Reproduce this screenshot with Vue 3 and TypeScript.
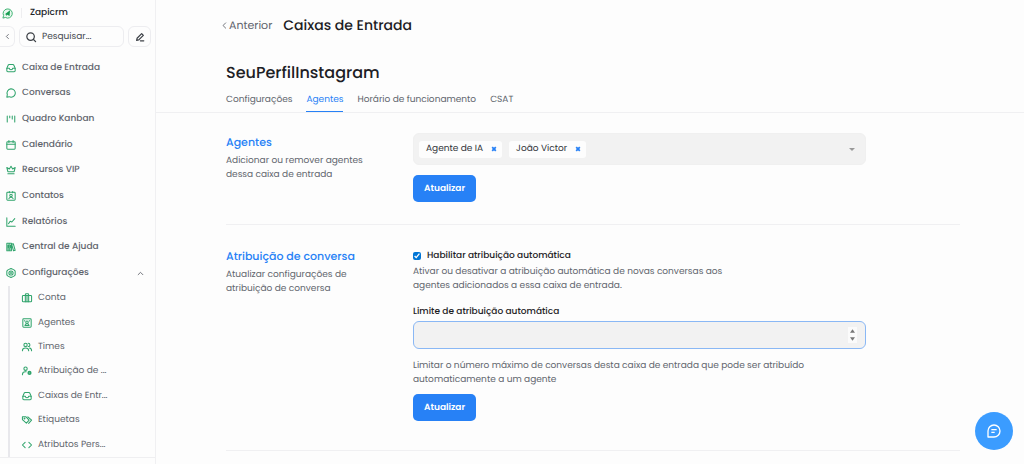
<script setup lang="ts">
import { ref } from 'vue'

interface NavItem {
  label: string
  icon: string
}

const icons: Record<string, string> = {
  inbox:
    '<path d="M2 13 5 5.500A3 3 0 0 1 7.800 3.500h8.400a3 3 0 0 1 2.800 2L22 13v5.500a2.500 2.500 0 0 1-2.500 2.500h-15A2.500 2.500 0 0 1 2 18.500z"/><path d="M2 12.500h6c0 2 1.800 3.500 4 3.500s4-1.500 4-3.500h6"/>',
  chat: '<path d="M2 22l1.200-6A10 10 0 1 1 7.500 20.800z"/>',
  kanban: '<path d="M3 5v14M9 5v4M15 5v7M21 5v14"/>',
  calendar: '<rect x="2" y="4" width="20" height="18" rx="2"/><path d="M2 10h20M7 1v5M17 1v5"/>',
  crown: '<path d="M4.500 16 2 6l6 3.500L12 3l4 6.500L22 6l-2.500 10zM4.500 21h15"/>',
  contact:
    '<rect x="2" y="3" width="20" height="19" rx="2"/><circle cx="12" cy="11" r="3"/><path d="M7 18.500c.8-2.500 2.500-3.500 5-3.500s4.200 1 5 3.500M8 1v3M16 1v3"/>',
  chart: '<path d="M2 2v20h20M6 16l4-6 4 2 7-8"/>',
  library: '<path d="M2 3h5.500v18H2zM7.500 3H13v18H7.500zM2 17h11M13.500 5l4-1 4.500 16-4 1zM5 7v6M10.500 7v6"/>',
  gear: '<path d="M9.500 2.200 12 1l2.500 1.200 5.500 3 2 2.300v9l-2 2.300-5.500 3L12 23l-2.500-1.200-5.500-3-2-2.300v-9l2-2.300z"/><circle cx="12" cy="12" r="5"/><circle cx="12" cy="12" r="1"/>',
  briefcase: '<rect x="1" y="6" width="22" height="15" rx="2"/><path d="M8 21V4a2 2 0 0 1 2-2h4a2 2 0 0 1 2 2v17M12 6v15"/>',
  agent:
    '<rect x="2" y="2" width="20" height="20" rx="2"/><circle cx="12" cy="10" r="3"/><path d="M7 18c.5-3 2.500-4 5-4s4.500 1 5 4zM6.500 6v1M17.500 6v1"/>',
  team: '<circle cx="8.500" cy="7" r="4"/><path d="M1 21c0-4 3-6.500 7.500-6.500S16 17 16 21M15 3a4 4 0 0 1 0 8M18 14.500c3.500.5 5 3 5 6.500"/>',
  assign:
    '<circle cx="8.500" cy="6.500" r="4"/><path d="M1 21c0-4.500 2.500-7 7-7h2"/><circle cx="18" cy="16.500" r="3" stroke-width="4"/>',
  tag: '<path d="M1 4h8l8 8.500-6.500 7L1 11zM14 4.500l9 8-7 7.500"/><circle cx="6" cy="8.500" r="1"/>',
  code: '<path d="M7.500 5.500 1 12l6.500 6.500M16.500 5.500 23 12l-6.500 6.500"/>',
}

const mainItems: NavItem[] = [
  { label: 'Caixa de Entrada', icon: 'inbox' },
  { label: 'Conversas', icon: 'chat' },
  { label: 'Quadro Kanban', icon: 'kanban' },
  { label: 'Calendário', icon: 'calendar' },
  { label: 'Recursos VIP', icon: 'crown' },
  { label: 'Contatos', icon: 'contact' },
  { label: 'Relatórios', icon: 'chart' },
  { label: 'Central de Ajuda', icon: 'library' },
  { label: 'Configurações', icon: 'gear' },
]

const subItems: NavItem[] = [
  { label: 'Conta', icon: 'briefcase' },
  { label: 'Agentes', icon: 'agent' },
  { label: 'Times', icon: 'team' },
  { label: 'Atribuição de ...', icon: 'assign' },
  { label: 'Caixas de Entr...', icon: 'inbox' },
  { label: 'Etiquetas', icon: 'tag' },
  { label: 'Atributos Pers...', icon: 'code' },
]

const tabs = ['Configurações', 'Agentes', 'Horário de funcionamento', 'CSAT']
const activeTab = ref('Agentes')
const agents = ref(['Agente de IA', 'João Victor'])
const autoAssign = ref(true)
const limit = ref<number | ''>('')

function removeAgent(name: string) {
  agents.value = agents.value.filter((a) => a !== name)
}

function step(delta: number) {
  limit.value = Math.max(0, Number(limit.value) + delta)
}
</script>

<template>
  <div class="app">
    <aside class="sidebar">
      <div class="brand">
        <svg class="logo" viewBox="0 0 24 24" aria-hidden="true">
          <path d="M2 22l1.500-5.500A10 10 0 1 1 7.500 20.700z" fill="#e9f8ef" stroke="#2fae68" stroke-width="2" />
          <path d="M5.500 14 17.500 5l-1 12.500-5-3-2.500 3v-4z" fill="#169c50" />
        </svg>
        <span class="brand-sep"></span>
        <span class="brand-name">Zapicrm</span>
      </div>
      <div class="search-row">
        <button class="collapse" type="button" aria-label="Recolher">
          <svg class="tiny" viewBox="0 0 24 24"><path d="M15 5l-7 7 7 7" /></svg>
        </button>
        <label class="search">
          <svg class="ico dark" viewBox="0 0 24 24"><circle cx="11" cy="11" r="9" /><path d="M18 18l5 5" /></svg>
          <input type="text" placeholder="Pesquisar..." aria-label="Pesquisar" />
        </label>
        <button class="compose" type="button" aria-label="Nova conversa">
          <svg class="ico dark" viewBox="0 0 24 24"><path d="M4 20l1-5L16 4l4 4L9 19zM13 21h8" /></svg>
        </button>
      </div>
      <nav class="nav">
        <ul class="main-list">
          <li v-for="item in mainItems" :key="item.label">
            <a href="#" class="nav-link">
              <svg class="ico" viewBox="0 0 24 24" aria-hidden="true" v-html="icons[item.icon]"></svg>
              <span>{{ item.label }}</span>
              <svg v-if="item.icon === 'gear'" class="tiny chevron" viewBox="0 0 24 24"><path d="M4 16l8-8 8 8" /></svg>
            </a>
          </li>
        </ul>
        <ul class="sub-list">
          <li v-for="item in subItems" :key="item.label">
            <a href="#" class="nav-link">
              <svg class="ico" viewBox="0 0 24 24" aria-hidden="true" v-html="icons[item.icon]"></svg>
              <span>{{ item.label }}</span>
            </a>
          </li>
        </ul>
      </nav>
    </aside>

    <main class="content">
      <header class="topbar">
        <a href="#" class="back">
          <svg class="tiny" viewBox="0 0 24 24"><path d="M16 3l-9 9 9 9" /></svg>
          Anterior
        </a>
        <h1>Caixas de Entrada</h1>
      </header>

      <div class="inbox-head">
        <h2>SeuPerfilInstagram</h2>
        <nav class="tabs">
          <a
            v-for="tab in tabs"
            :key="tab"
            href="#"
            :class="['tab', { active: tab === activeTab }]"
            @click.prevent="activeTab = tab"
            >{{ tab }}</a
          >
        </nav>
      </div>

      <section class="setting">
        <div class="intro">
          <h3>Agentes</h3>
          <p>Adicionar ou remover agentes dessa caixa de entrada</p>
        </div>
        <div class="fields">
          <div class="multiselect">
            <span v-for="agent in agents" :key="agent" class="chip">
              {{ agent }}
              <button type="button" :aria-label="'Remover ' + agent" @click="removeAgent(agent)">
                <svg viewBox="0 0 10 10"><path d="M2 2l6 6M8 2l-6 6" /></svg>
              </button>
            </span>
            <button class="caret" type="button" aria-label="Abrir lista">
              <svg viewBox="0 0 8 4"><path d="M0 0h8L4 4z" /></svg>
            </button>
          </div>
          <button class="primary" type="button">Atualizar</button>
        </div>
      </section>

      <section class="setting second">
        <div class="intro">
          <h3>Atribuição de conversa</h3>
          <p>Atualizar configurações de atribuição de conversa</p>
        </div>
        <div class="fields">
          <label class="check">
            <input v-model="autoAssign" type="checkbox" />
            <span>Habilitar atribuição automática</span>
          </label>
          <p class="check-help">
            Ativar ou desativar a atribuição automática de novas conversas aos agentes adicionados a essa caixa de
            entrada.
          </p>
          <label class="field-label" for="limit">Limite de atribuição automática</label>
          <div class="number">
            <input id="limit" v-model="limit" type="number" min="0" />
            <div class="spinner">
              <button type="button" aria-label="Aumentar" @click="step(1)">
                <svg viewBox="0 0 6 4"><path d="M0 4h6L3 0z" /></svg>
              </button>
              <button type="button" aria-label="Diminuir" @click="step(-1)">
                <svg viewBox="0 0 6 4"><path d="M0 0h6L3 4z" /></svg>
              </button>
            </div>
          </div>
          <p class="limit-help">
            Limitar o número máximo de conversas desta caixa de entrada que pode ser atribuído automaticamente a um
            agente
          </p>
          <button class="primary" type="button">Atualizar</button>
        </div>
      </section>
    </main>

    <button class="chat-fab" type="button" aria-label="Abrir chat">
      <svg viewBox="0 0 24 24"><path d="M3 21v-9a9 9 0 1 1 9 9zM8 10h8M8 14h5" /></svg>
    </button>
  </div>
</template>

<style>
body {
  margin: 0;
  background: #fdfdfd;
}
</style>

<style scoped>
.app {
  display: flex;
  min-height: 100vh;
  font-family: Poppins, Inter, 'Open Sans', sans-serif;
  font-size: 9px;
  line-height: 14px;
  text-rendering: geometricPrecision;
  color: #60646c;
}
.app * {
  box-sizing: border-box;
}
h1,
h2,
h3,
p,
ul {
  margin: 0;
  padding: 0;
}
h1,
h2,
h3 {
  font-weight: 500;
}
ul {
  list-style: none;
}
a {
  color: inherit;
  text-decoration: none;
}
button {
  font: inherit;
  text-rendering: inherit;
  padding: 0;
  border: 0;
  background: none;
  cursor: pointer;
}
svg {
  display: block;
  flex: none;
  overflow: visible;
}
.ico,
.tiny {
  fill: none;
  stroke: #30a46c;
  stroke-width: 2.5;
  stroke-linecap: round;
  stroke-linejoin: round;
}
.ico {
  width: 10px;
  height: 10px;
}
.tiny {
  width: 7px;
  height: 7px;
  stroke: #60646c;
  stroke-width: 3;
}
.ico.dark {
  stroke: #3c4046;
  stroke-width: 3;
}

.sidebar {
  flex: none;
  width: 156px;
  border-right: 1px solid #f0f0f2;
}
.brand {
  display: flex;
  align-items: center;
  height: 26px;
  padding-left: 2px;
  color: #202328;
  font-weight: 500;
}
.logo {
  width: 11px;
  height: 11px;
}
.brand-sep {
  width: 1px;
  height: 10px;
  margin: 0 8px;
  background: #eeeef0;
}
.search-row {
  display: flex;
  gap: 4px;
  height: 21px;
  padding-right: 4px;
}
.collapse {
  display: flex;
  align-items: center;
  justify-content: center;
  width: 15px;
  border: 1px solid #ededf0;
  border-left: 0;
  border-radius: 0 6px 6px 0;
}
.search {
  display: flex;
  flex: 1;
  align-items: center;
  gap: 6px;
  min-width: 0;
  padding: 0 6px;
  border: 1px solid #ededf0;
  border-radius: 6px;
}
.search input {
  flex: 1;
  min-width: 0;
  padding: 0;
  border: 0;
  outline: 0;
  background: none;
  font: inherit;
  text-rendering: inherit;
}
.search input::placeholder {
  color: #44484e;
  opacity: 1;
}
.compose {
  display: flex;
  align-items: center;
  justify-content: center;
  width: 23px;
  border: 1px solid #ededf0;
  border-radius: 6px;
}
.nav {
  padding-top: 8px;
  border-bottom: 1px solid #efeff1;
}
.main-list,
.sub-list {
  display: grid;
  grid-auto-rows: 1fr;
}
.main-list {
  min-height: 231px;
  padding-left: 6px;
  font-weight: 500;
}
.sub-list {
  min-height: 171px;
  margin-left: 8px;
  padding-left: 12px;
  border-left: 2px solid #e8e8ec;
}
.nav-link {
  display: flex;
  align-items: center;
  gap: 6px;
  height: 100%;
}
.chevron {
  margin: 0 11px 0 auto;
}

.content {
  flex: 1;
  min-width: 0;
}
.topbar {
  display: flex;
  align-items: center;
  gap: 11px;
  height: 50px;
  padding-left: 65px;
}
.back {
  display: flex;
  align-items: center;
  gap: 1px;
  font-size: 11px;
}
h1 {
  font-size: 14px;
  line-height: 20px;
  color: #1c2024;
}
.inbox-head {
  padding: 12px 70px 0;
  border-bottom: 1px solid #f0f0f2;
}
h2 {
  font-size: 16px;
  line-height: 22px;
  color: #1c2024;
}
.tabs {
  display: flex;
  gap: 14px;
  margin-top: 6px;
}
.tab {
  height: 22px;
  padding-top: 3px;
  border-bottom: 1px solid transparent;
}
.tab.active {
  border-color: #2781f6;
  color: #2781f6;
}

.setting {
  display: flex;
  gap: 34px;
  margin: 0 64px 0 70px;
  padding: 20px 0 22px;
  border-bottom: 1px solid #f0f0f2;
}
.second {
  padding: 22px 0 29px;
}
.intro {
  flex: none;
  width: 153px;
  padding-top: 1px;
}
h3 {
  margin-bottom: 4px;
  font-size: 11px;
  line-height: 16px;
  color: #2781f6;
}
.fields {
  flex: 1;
  max-width: 453px;
}
.multiselect {
  display: flex;
  align-items: center;
  gap: 7px;
  height: 32px;
  padding: 0 10px 0 5px;
  border: 1px solid #f0f0f0;
  border-radius: 6px;
  background: #f2f2f2;
}
.chip {
  display: flex;
  align-items: center;
  gap: 8px;
  height: 17px;
  padding: 0 5px 0 7px;
  border-radius: 3px;
  background: #fdfdfd;
  color: #303338;
}
.chip svg {
  width: 6px;
  height: 6px;
  stroke: #2781f6;
  stroke-width: 3;
}
.caret {
  margin-left: auto;
}
.caret svg {
  width: 6px;
  height: 3px;
  fill: #999;
}
.primary {
  display: block;
  height: 27px;
  margin-top: 10px;
  padding: 0 11px;
  border-radius: 5px;
  background: #2781f6;
  color: #fff;
  font-weight: 600;
}
.check {
  display: flex;
  align-items: center;
  gap: 6px;
  height: 18px;
  color: #1c2024;
  font-weight: 500;
}
.check input {
  width: 8px;
  height: 8px;
  margin: 0;
  accent-color: #0075d5;
}
.check-help {
  max-width: 330px;
}
.field-label {
  display: block;
  margin: 12px 0 2px;
  color: #1c2024;
  font-weight: 500;
}
.number {
  display: flex;
  align-items: center;
  height: 28px;
  padding-right: 8px;
  border: 1px solid #8ab8f5;
  border-radius: 6px;
  background: #f2f2f2;
}
.number input {
  flex: 1;
  min-width: 0;
  height: 100%;
  padding: 0 8px;
  border: 0;
  outline: 0;
  background: none;
  font: inherit;
  appearance: textfield;
}
.spinner {
  display: grid;
  width: 9px;
  background: #fbfbfb;
}
.spinner button {
  display: grid;
  place-items: center;
  height: 8px;
}
.spinner svg {
  width: 5px;
  height: 4px;
  fill: #777;
}
.limit-help {
  margin-top: 10px;
}
.second .primary {
  margin-top: 7px;
}
.chat-fab {
  position: fixed;
  right: 11px;
  bottom: 14px;
  display: grid;
  place-items: center;
  width: 38px;
  height: 38px;
  border-radius: 50%;
  background: #3b9cff;
}
.chat-fab svg {
  width: 16px;
  height: 16px;
  fill: none;
  stroke: #fff;
  stroke-width: 2;
  stroke-linejoin: round;
}
</style>
